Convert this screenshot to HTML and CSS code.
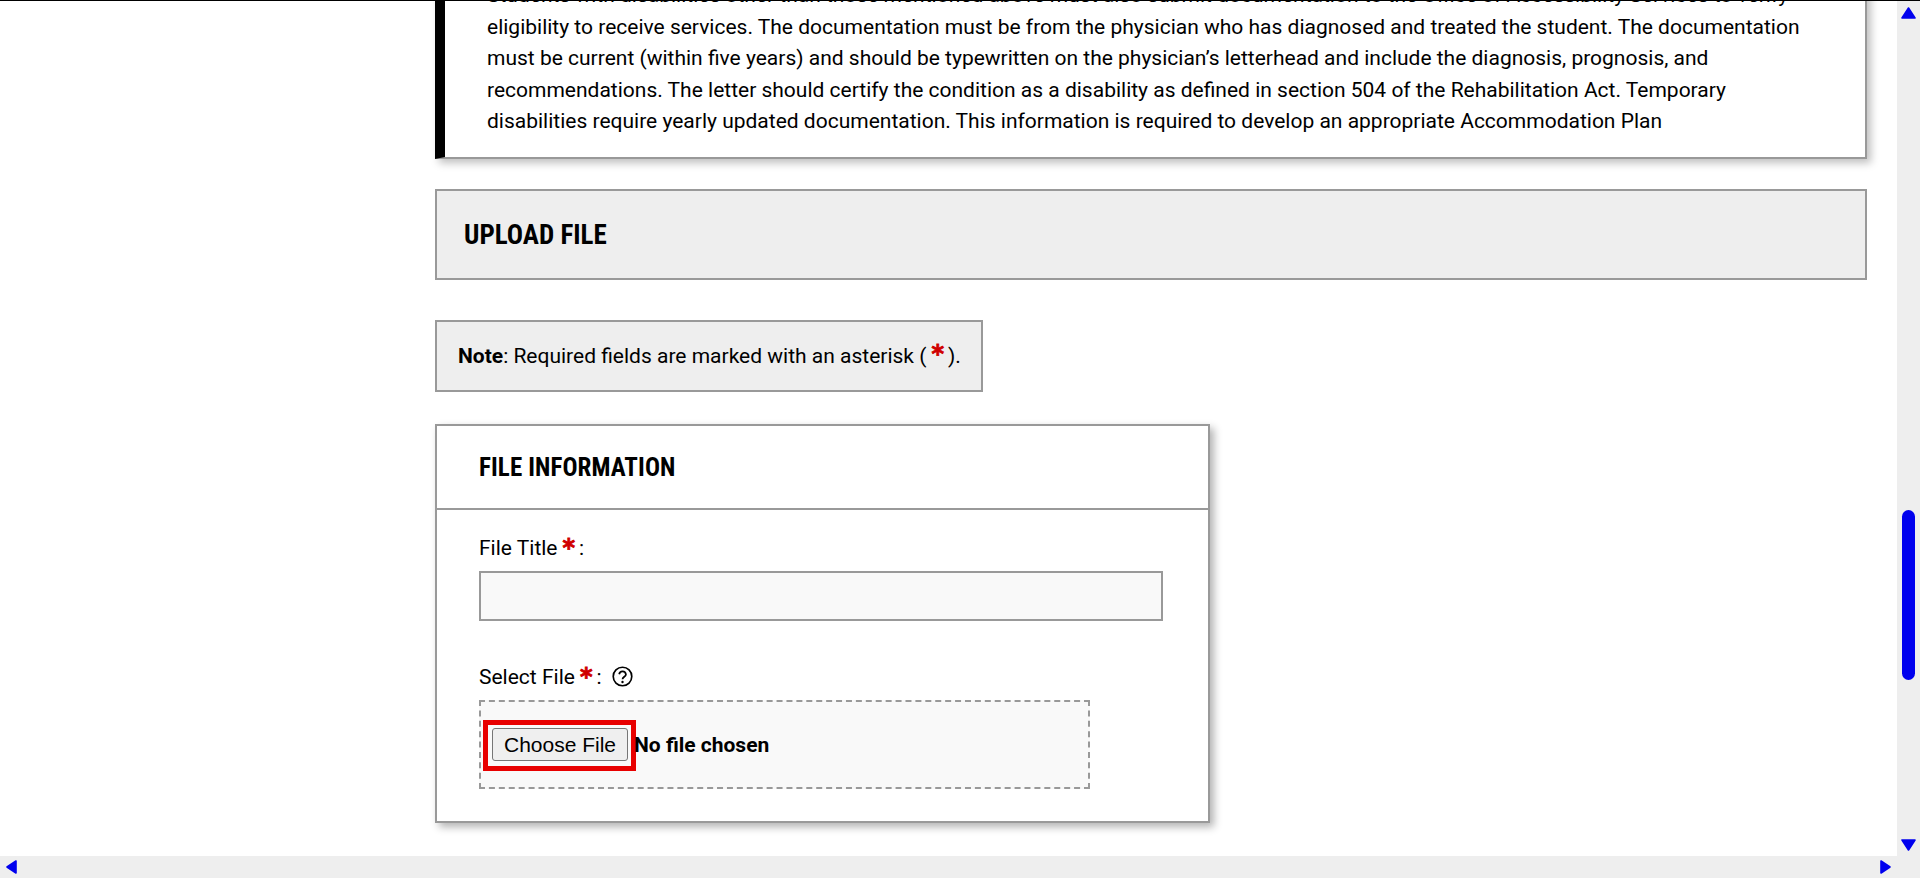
FILE: index.html
```html
<!DOCTYPE html>
<html lang="en">
<head>
<meta charset="utf-8">
<title>Upload File</title>
<link rel="stylesheet" href="styles.css">
</head>
<body>
<div class="window">
  <div class="viewport">
    <main class="content">
      <section class="notice">
        <p>Students with disabilities other than those mentioned above must also submit documentation to the Office of Accessibility Services to verify eligibility to receive services. The documentation must be from the physician who has diagnosed and treated the student. The documentation must be current (within five years) and should be typewritten on the physician’s letterhead and include the diagnosis, prognosis, and recommendations. The letter should certify the condition as a disability as defined in section 504 of the Rehabilitation Act. Temporary disabilities require yearly updated documentation. This information is required to develop an appropriate Accommodation Plan</p>
      </section>
      <h1 class="page-title">UPLOAD FILE</h1>
      <p class="note"><b>Note</b>: Required fields are marked with an asterisk (<span class="req">*</span>).</p>
      <form class="card">
        <h2 class="card-title">FILE INFORMATION</h2>
        <div class="card-body">
          <label class="field-label" for="title">File Title<span class="req">*</span>:</label>
          <input class="text-input" id="title" type="text">
          <div class="field-label second">Select File<span class="req">*</span>:
            <svg class="help" viewBox="0 0 24 24" width="21" height="21" aria-hidden="true"><circle cx="12" cy="12" r="10.6" fill="none" stroke="#000" stroke-width="1.9"/><path d="M8.2 9.4a3.9 3.9 0 0 1 7.7.2c0 2.6-3.8 2.8-3.9 5.6" fill="none" stroke="#000" stroke-width="2"/><circle cx="12" cy="18.3" r="1.35"/></svg>
          </div>
          <div class="drop">
            <span class="focus-ring"><button class="choose" type="button">Choose File</button></span><span class="file-name">No file chosen</span>
          </div>
        </div>
      </form>
    </main>
    <div class="vbar">
      <svg class="arrow" viewBox="0 0 15 12" width="15" height="12"><path d="M7.5 1 14 11H1z"/></svg>
      <div class="track"><div class="thumb"></div></div>
      <svg class="arrow" viewBox="0 0 15 12" width="15" height="12"><path d="M1 1h13L7.5 11z"/></svg>
    </div>
  </div>
  <div class="hbar">
    <svg class="arrow" viewBox="0 0 11 14" width="11" height="14"><path d="M10 1v12L1 7z"/></svg>
    <svg class="arrow" viewBox="0 0 11 14" width="11" height="14"><path d="M1 1v12l9-6z"/></svg>
  </div>
</div>
</body>
</html>
```
FILE: styles.css
```css
* { box-sizing: border-box; }
html, body { margin: 0; height: 100%; overflow: hidden; }
body { background: #fff; color: #000; font-family: Roboto, "Liberation Sans", sans-serif; font-size: 21px; }
.window { height: 878px; display: flex; flex-direction: column; border-top: 1px solid #000; }
.viewport { flex: 1; min-height: 0; display: flex; }
.content { flex: 1; min-width: 0; overflow: hidden; padding: 0 30px 0 435px; }
.notice { margin-top: -42px; background: #fff; border: 2px solid #999; border-left: 10px solid #000; padding: 19px 50px 19.5px 42px; box-shadow: 4px 4px 8px rgba(0,0,0,.25); }
.notice p { margin: 0; line-height: 31.5px; }
.page-title { margin: 30px 0 0; height: 91px; display: flex; align-items: center; padding-left: 27px; background: #eee; border: 2px solid #999; font-size: 27px; font-weight: 700; font-stretch: 75%; }
.note { margin: 40px 0 0; width: 548px; height: 72px; line-height: 68px; padding-left: 21px; background: #eee; border: 2px solid #999; }
.req { display: inline-block; margin: 0 4px 0 5px; color: #d00000; font-size: 24px; font-weight: 700; line-height: 0; vertical-align: 1px; font-family: "DejaVu Sans", sans-serif; -webkit-text-stroke: .8px #d00000; }
.card { margin: 32px 0 0; width: 775px; background: #fff; border: 2px solid #999; box-shadow: 4px 4px 8px rgba(0,0,0,.3); }
.card-title { margin: 0; height: 84px; display: flex; align-items: center; padding-left: 42px; border-bottom: 2px solid #999; font-size: 25px; font-weight: 700; font-stretch: 75%; letter-spacing: .1px; }
.card-body { padding: 23px 44px 32px 42px; }
.field-label { display: flex; align-items: center; height: 30px; }
.field-label.second { margin-top: 41px; }
.help { margin: -2px 0 0 10px; }
.text-input { display: block; width: 684px; height: 50px; margin-top: 8px; background: #f9f9f9; border: 2px solid #999; }
.drop { width: 611px; height: 89px; margin-top: 8px; padding: 18px 0 0 2px; display: flex; align-items: flex-start; background: #f9f9f9; border: 2px dashed #999; }
.focus-ring { display: block; border: 5px solid #e80000; padding: 3px 3px 5px 4px; }
.choose { display: block; width: 136px; height: 33px; padding: 0; font: 21px "Liberation Sans", Arial, sans-serif; color: #000; background: #efefef; border: 1px solid #767676; border-radius: 3px; }
.file-name { font-weight: 700; line-height: 51px; margin-left: -2px; }
.vbar { width: 23px; flex: none; background: #eee; display: flex; flex-direction: column; align-items: center; padding: 6px 0 5px; }
.track { flex: 1; width: 100%; padding-top: 491px; display: flex; justify-content: center; }
.thumb { width: 13px; height: 170px; border-radius: 7px; background: #0000ee; }
.arrow { display: block; fill: #0000ee; stroke: #0000ee; stroke-width: 1.6; stroke-linejoin: round; flex: none; overflow: visible; }
.hbar { height: 22px; flex: none; background: #eee; display: flex; align-items: center; justify-content: space-between; padding: 0 29px 0 6px; }
```
